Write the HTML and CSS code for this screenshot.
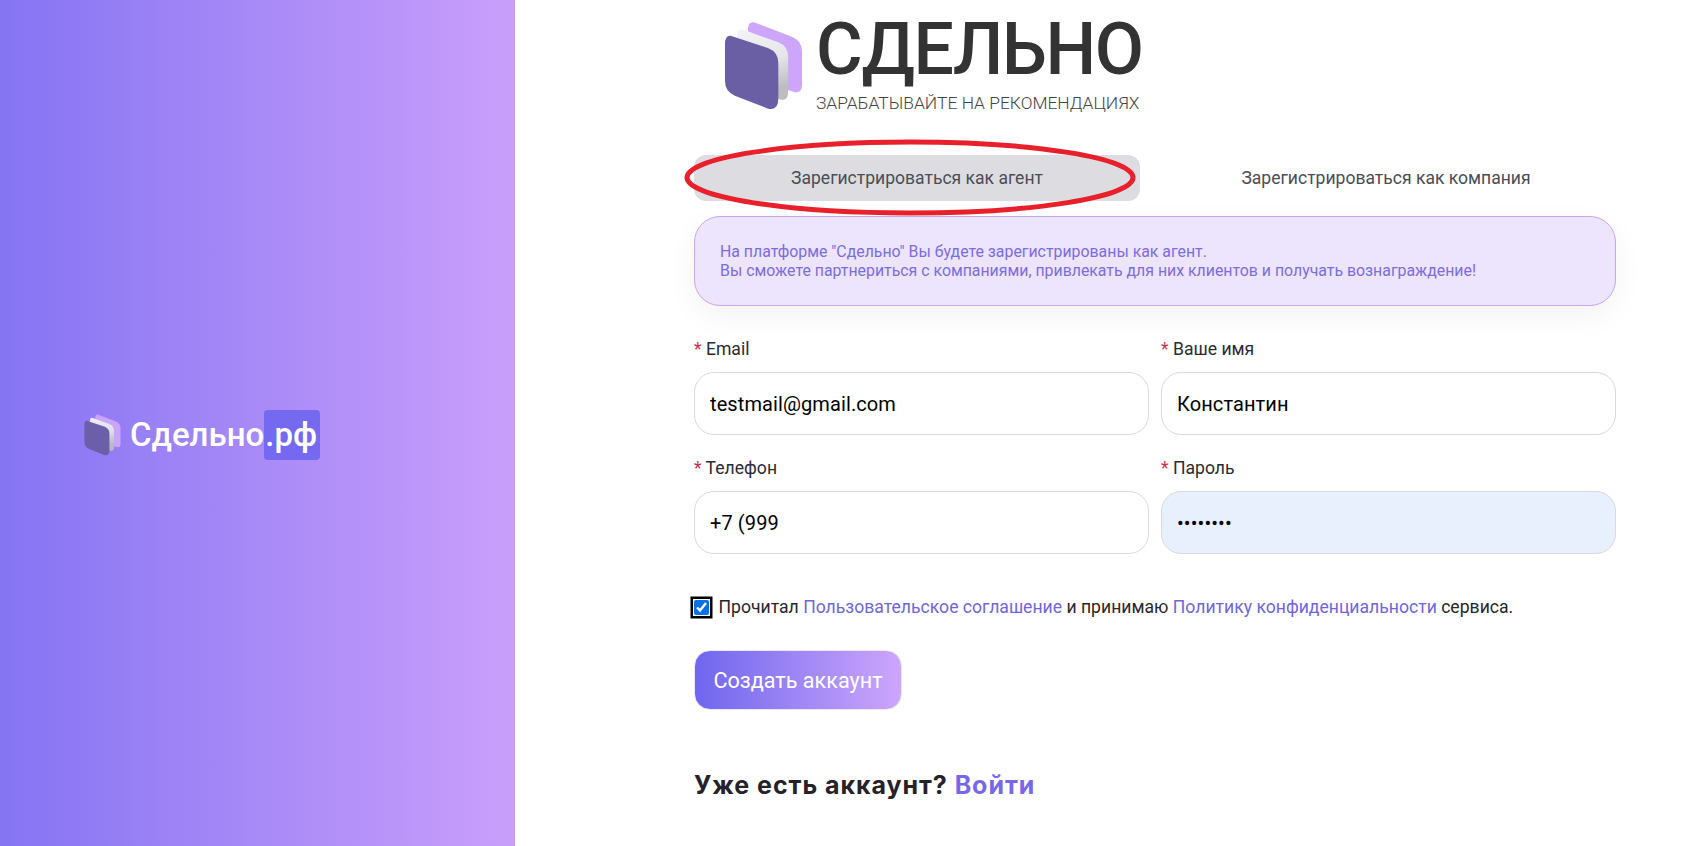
FILE: index.html
```html
<!DOCTYPE html>
<html lang="ru">
<head>
<meta charset="utf-8">
<title>Сдельно</title>
<link rel="stylesheet" href="styles.css">
</head>
<body>
<div class="page">
  <aside class="side">
    <div class="side-brand">
      <svg class="side-icon" viewBox="0 0 80 90" aria-hidden="true">
        <use href="#cube"/>
      </svg>
      <span class="side-name">Сдельно</span><span class="side-tld">.рф</span>
    </div>
  </aside>
  <main class="main">
    <div class="brand">
      <svg class="brand-icon" viewBox="0 0 80 90" aria-hidden="true">
        <defs>
          <linearGradient id="g" x1="0" y1="0" x2="0.3" y2="1">
            <stop offset="0" stop-color="#f4f4f6"/>
            <stop offset="0.6" stop-color="#e6e6ea"/>
            <stop offset="1" stop-color="#bdbdc0"/>
          </linearGradient>
          <g id="cube">
            <path d="M31 1 L68 15 Q79 19 79 30 L79 64 Q79 74 70 71 L36 60 L24 8 Q25 -1 31 1Z" fill="#cda6fb"/>
            <path d="M19 8 L55 21 Q65 25 65 36 L65 70 Q65 81 57 79 L22 66 L13 15 Q13 6 19 8Z" fill="url(#g)"/>
            <path d="M9 15 L45 27 Q55 31 55 42 L55 78 Q55 91 44 88 L11 75 Q1 71 1 60 L1 23 Q1 12 9 15Z" fill="#6a5ea5"/>
          </g>
        </defs>
        <use href="#cube"/>
      </svg>
      <div class="brand-text">
        <div class="brand-name">СДЕЛЬНО</div>
        <div class="brand-tag">ЗАРАБАТЫВАЙТЕ НА РЕКОМЕНДАЦИЯХ</div>
      </div>
    </div>

    <div class="tabs">
      <button class="tab tab-active" type="button">Зарегистрироваться как агент</button>
      <button class="tab" type="button">Зарегистрироваться как компания</button>
      <svg class="mark" viewBox="0 0 454 81" aria-hidden="true">
        <ellipse cx="227" cy="40.5" rx="223" ry="35.5" fill="none" stroke="#e8202c" stroke-width="5"/>
      </svg>
    </div>

    <div class="notice">
      На платформе "Сдельно" Вы будете зарегистрированы как агент.<br>
      Вы сможете партнериться с компаниями, привлекать для них клиентов и получать вознаграждение!
    </div>

    <form class="form">
      <label class="field">
        <span class="label"><span class="req">*</span> Email</span>
        <input class="input" type="text" value="testmail@gmail.com">
      </label>
      <label class="field">
        <span class="label"><span class="req">*</span> Ваше имя</span>
        <input class="input" type="text" value="Константин">
      </label>
      <label class="field">
        <span class="label"><span class="req">*</span> Телефон</span>
        <input class="input" type="text" value="+7 (999">
      </label>
      <label class="field">
        <span class="label"><span class="req">*</span> Пароль</span>
        <input class="input input-filled" type="password" value="password">
      </label>
    </form>

    <div class="agree">
      <input class="check" type="checkbox" checked>
      <span>Прочитал <a class="link" href="#">Пользовательское соглашение</a> и принимаю <a class="link" href="#">Политику конфиденциальности</a> сервиса.</span>
    </div>

    <button class="submit" type="button">Создать аккаунт</button>

    <div class="login">Уже есть аккаунт? <a class="login-link" href="#">Войти</a></div>
  </main>
</div>
</body>
</html>
```

FILE: styles.css
```css
* { box-sizing: border-box; }
html, body { margin: 0; height: 100%; overflow: hidden; }
body { font-family: Roboto, "Liberation Sans", sans-serif; background: #fff; color: #26262c; }
.page { display: flex; height: 846px; }
.side {
  width: 515px;
  flex: none;
  display: flex;
  align-items: center;
  padding-left: 84px;
  background: linear-gradient(90deg, #8574f3 0%, #ca9ffb 100%);
}
.side-brand { display: flex; align-items: center; margin-top: 24px; }
.side-icon { width: 37px; height: 42px; margin-right: 9px; opacity: .95; }
.side-name { color: #fff; font-size: 33px; font-weight: 500; line-height: 50px; }
.side-tld { color: #fff; font-size: 33px; font-weight: 500; line-height: 50px; background: #7469ef; border-radius: 4px; padding: 0 3px 0 1px; }

.main { flex: 1; padding: 0 86px 0 179px; }
.brand { display: flex; height: 155px; padding: 21px 0 0 30px; }
.brand-icon { width: 79px; height: 90px; margin-right: 13px; }
.brand-text { color: #333; }
.brand-name { font-size: 71.5px; font-weight: 500; letter-spacing: -1.3px; line-height: 54px; padding-top: 2px; white-space: nowrap; }
.brand-tag { font-size: 17.4px; font-weight: 300; line-height: 20px; margin-top: 16px; color: #444; }

.tabs { position: relative; display: grid; grid-template-columns: 446px 1fr; column-gap: 16px; height: 46px; }
.tab {
  border: 0;
  background: transparent;
  font: 400 17.55px Roboto, sans-serif;
  color: #4a4d55;
  border-radius: 12px;
  padding: 0 0 1px;
}
.tab-active { background: #dddde1; }
.mark { position: absolute; left: -11px; top: -18px; width: 454px; height: 81px; }

.notice {
  margin-top: 15px;
  height: 90px;
  padding: 25px 25px 0;
  background: #ede4fe;
  border: 1px solid #c9a6ef;
  border-radius: 26px;
  color: #7b6de0;
  font-size: 15.86px;
  line-height: 19px;
  box-shadow: 0 10px 30px rgba(0, 0, 0, .05);
}

.form { display: grid; grid-template-columns: 1fr 1fr; column-gap: 12px; row-gap: 22px; margin-top: 32px; }
.field { display: block; }
.label { display: block; font-size: 17.6px; line-height: 22px; margin-bottom: 12px; color: #2b2b33; }
.req { color: #c9304f; }
.input {
  display: block;
  width: 100%;
  height: 63px;
  padding: 0 15px;
  border: 1px solid #d9d9de;
  border-radius: 20px;
  background: #fff;
  font: 400 20px Roboto, sans-serif;
  letter-spacing: .1px;
  color: #000;
  outline: none;
}
.input-filled { background: #e8f0fe; }

.agree { display: flex; align-items: center; margin-top: 42px; font-size: 17.6px; line-height: 22px; color: #26262c; }
.check {
  width: 15px;
  height: 15px;
  margin: 0 9.5px 0 0;
  accent-color: #0b6fe8;
  border-radius: 3px;
  box-shadow: 0 0 0 1px #fff, 0 0 0 3.5px #000;
}
.link { color: #7165dc; text-decoration: none; }

.submit {
  display: block;
  margin: 32px 0 0;
  width: 208px;
  height: 60px;
  border: 1px solid #efe6fe;
  border-radius: 16px;
  background: linear-gradient(90deg, #6f66ee 0%, #cda6fc 100%);
  color: #fff;
  font: 400 21.6px Roboto, sans-serif;
  padding: 0;
}

.login { margin-top: 60px; font-family: Inter, sans-serif; font-size: 25px; font-weight: 700; letter-spacing: .95px; line-height: 30px; color: #26222c; }
.login-link { color: #7668e6; text-decoration: none; }
```
